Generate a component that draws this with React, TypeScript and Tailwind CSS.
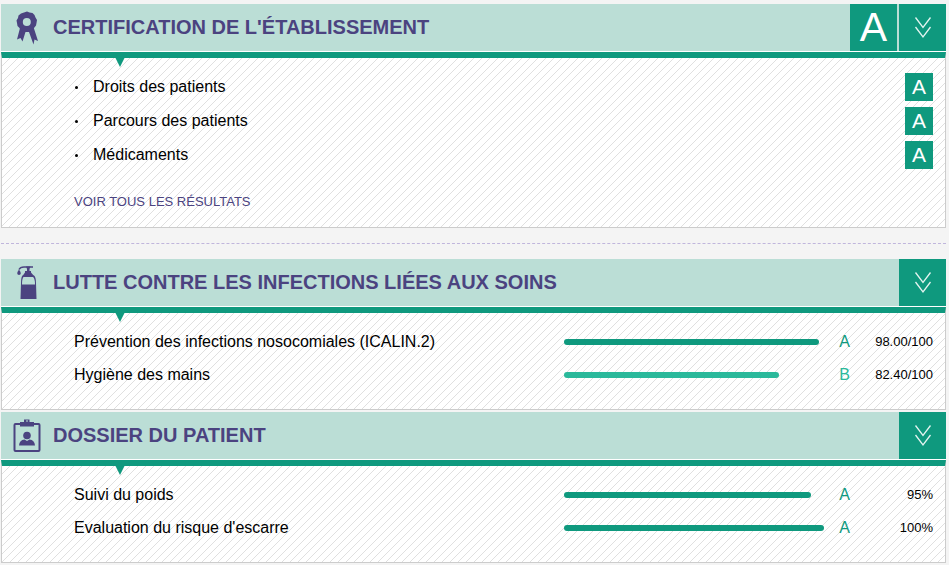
import type { ReactNode } from "react";

const hatch =
  "bg-white bg-[linear-gradient(135deg,transparent_47%,#e0e0e0_48%,#e0e0e0_52%,transparent_53%)] bg-[length:8px_8px]";

function RibbonIcon() {
  return (
    <svg width="24" height="34" viewBox="0 0 24 34" aria-hidden="true">
      <path
        d="M5 17 L2 28.500 L5.500 27 L7.500 30.500 L10.500 21 L14 21 L18.500 33.500 L19.500 28.500 L23 30 L18.500 16 Z"
        fill="#4b4380"
      />
      <path
        d="M9 1.500 L12 0.500 L14.500 1.500 L17.500 2 L19.500 4 L20.500 6.500 L22 9 L21.500 12 L21 14.500 L19 17 L17 19 L14.500 20 L11.500 21 L9 20 L6 19.500 L4.500 17 L2.500 15 L2 12 L1.500 9.500 L3 7 L3.500 4.500 L6 2.500 Z"
        fill="#4b4380"
      />
      <circle cx="11.800" cy="11" r="4" fill="#bbded6" />
    </svg>
  );
}

function SoapIcon() {
  return (
    <svg width="24" height="34" viewBox="-1 0 24 34" aria-hidden="true">
      <path d="M3 3.500 C4 1.500 6 1 8 1 L17 1" fill="none" stroke="#4b4380" strokeWidth="1.500" />
      <path d="M10 0.500 H14.500 L13.500 3 V5 H15 V6.500 L18 10 H6.500 L9 6.500 V5 H11 V3 Z" fill="#4b4380" />
      <path d="M3 3.500 Q-0.500 8.500 3 9 Q6.500 8.500 3 3.500 Z" fill="#4b4380" />
      <path d="M6.500 9.500 H18 Q20 11 20 17 L20.500 33 H4.500 L5 17 Q5 11 6.500 9.500 Z" fill="#4b4380" />
      <path d="M7.500 11 H17 Q19 12.500 19 18.500 H6 Q6 12.500 7.500 11 Z" fill="#bbded6" />
    </svg>
  );
}

function RecordIcon() {
  return (
    <svg width="28" height="34" viewBox="0.5 0 28 34" aria-hidden="true">
      <rect x="2" y="5" width="25" height="27" rx="1" fill="none" stroke="#4b4380" strokeWidth="2" />
      <path d="M7.500 7.500 V3 H11.500 V0.500 H17 V3 H21.500 V7.500 Z" fill="#4b4380" />
      <rect x="13.500" y="1.500" width="2" height="1" fill="#bbded6" />
      <circle cx="14.500" cy="16.500" r="3.800" fill="#4b4380" />
      <path d="M6.500 26.500 Q7 21 12 20.500 L14.500 22 L17 20.500 Q22 21 22.500 26.500 Z" fill="#4b4380" />
    </svg>
  );
}

function Chevrons() {
  return (
    <svg width="18" height="22" viewBox="0 0 18 22" fill="none" stroke="#e3f4f0" strokeWidth="1.300" aria-hidden="true">
      <path d="M1.500 0.500 L9 10.500 L16.500 0.500 M1.500 10 L9 20 L16.500 10" />
    </svg>
  );
}

function Section({ title, icon, grade, children }: { title: string; icon: ReactNode; grade?: string; children: ReactNode }) {
  return (
    <section>
      <header className="flex h-12 items-stretch border-b border-white bg-[#bbded6]">
        <div className="flex w-[52px] shrink-0 items-center justify-center">{icon}</div>
        <h2 className="flex flex-1 items-center pb-[2px] text-xl font-bold text-[#4b4380]">{title}</h2>
        {grade && (
          <span className="mr-[2px] flex w-[47px] items-center justify-center bg-[#0f997e] pb-px text-[41px] leading-none text-white">
            {grade}
          </span>
        )}
        <button type="button" aria-label={`Afficher : ${title}`} className="flex w-[47px] items-center justify-center bg-[#0f997e]">
          <Chevrons />
        </button>
      </header>
      <div className={`relative border border-t-[6px] border-[#ccc] border-t-[#0f997e] ${hatch}`}>
        <svg className="absolute top-0 left-[113px]" width="10" height="9" viewBox="0 0 10 9" aria-hidden="true">
          <path d="M0.500 0 H9.500 L5 9 Z" fill="#0f997e" />
        </svg>
        {children}
      </div>
    </section>
  );
}

type Score = { label: string; percent: number; grade: string; value: string };

function Scores({ rows }: { rows: Score[] }) {
  return (
    <ul className="pt-3 pr-3 pb-[18px] pl-[72px]">
      {rows.map((row) => (
        <li key={row.label} className="flex h-[33px] items-center">
          <span className="flex-1">{row.label}</span>
          <div className="w-[260px]">
            <div
              className={`h-[6px] rounded-full ${row.grade === "A" ? "bg-[#0f997e]" : "bg-[#2bb99b]"}`}
              style={{ width: `${row.percent}%` }}
            />
          </div>
          <span className={`ml-[15px] ${row.grade === "A" ? "text-[#0f997e]" : "text-[#2bb99b]"}`}>{row.grade}</span>
          <span className="w-[83px] text-right text-[13px]">{row.value}</span>
        </li>
      ))}
    </ul>
  );
}

export default function App() {
  return (
    <main className="min-h-screen bg-[#f4f4f4] pt-1 pr-[3px] pb-[2px] pl-px font-['Liberation_Sans',Arial,sans-serif] text-base text-black">
      <Section title="CERTIFICATION DE L'ÉTABLISSEMENT" icon={<RibbonIcon />} grade="A">
        <div className="pt-3 pr-3 pb-[15px] pl-[72px]">
          <ul>
            {["Droits des patients", "Parcours des patients", "Médicaments"].map((label) => (
              <li key={label} className="flex h-[34px] items-center">
                <span className="mr-[14px] ml-px size-[3px] rounded-full bg-black" />
                <span className="flex-1 pl-px">{label}</span>
                <span className="flex size-7 items-center justify-center bg-[#0f997e] pb-[2px] text-[21px] leading-none text-white">
                  A
                </span>
              </li>
            ))}
          </ul>
          <a href="#resultats" className="mt-5 block w-fit text-[13px] leading-5 text-[#4b4380]">
            VOIR TOUS LES RÉSULTATS
          </a>
        </div>
      </Section>
      <hr className="my-[15px] border-0 border-t border-dashed border-[#c0b6dc]" />
      <Section title="LUTTE CONTRE LES INFECTIONS LIÉES AUX SOINS" icon={<SoapIcon />}>
        <Scores
          rows={[
            { label: "Prévention des infections nosocomiales (ICALIN.2)", percent: 98, grade: "A", value: "98.00/100" },
            { label: "Hygiène des mains", percent: 82.4, grade: "B", value: "82.40/100" },
          ]}
        />
      </Section>
      <div className="mt-[2px]">
        <Section title="DOSSIER DU PATIENT" icon={<RecordIcon />}>
          <Scores
            rows={[
              { label: "Suivi du poids", percent: 95, grade: "A", value: "95%" },
              { label: "Evaluation du risque d'escarre", percent: 100, grade: "A", value: "100%" },
            ]}
          />
        </Section>
      </div>
    </main>
  );
}
